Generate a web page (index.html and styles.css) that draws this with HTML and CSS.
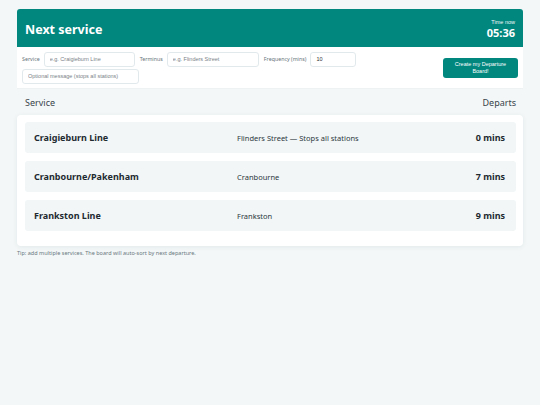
FILE: index.html
```html
<!DOCTYPE html>
<html>
<head>
<meta charset="utf-8">
<link rel="stylesheet" href="styles.css">
</head>
<body>
<div class="page">
  <header class="top">
    <h1 class="title">Next service</h1>
    <div class="clock">
      <div class="clock-label">Time now</div>
      <div class="clock-time">05:36</div>
    </div>
  </header>
  <form class="panel">
    <div class="fields">
      <label class="lbl">Service</label>
      <input class="inp inp-service" placeholder="e.g. Craigieburn Line">
      <label class="lbl">Terminus</label>
      <input class="inp inp-term" placeholder="e.g. Flinders Street">
      <label class="lbl">Frequency (mins)</label>
      <input class="inp inp-freq" value="10">
      <input class="inp inp-msg" placeholder="Optional message (stops all stations)">
    </div>
    <button type="button" class="btn">Create my Departure Board!</button>
  </form>
  <div class="cols">
    <span>Service</span>
    <span>Departs</span>
  </div>
  <div class="board">
    <div class="row">
      <div class="name">Craigieburn Line</div>
      <div class="dest">Flinders Street — Stops all stations</div>
      <div class="when">0 mins</div>
    </div>
    <div class="row">
      <div class="name">Cranbourne/Pakenham</div>
      <div class="dest">Cranbourne</div>
      <div class="when">7 mins</div>
    </div>
    <div class="row">
      <div class="name">Frankston Line</div>
      <div class="dest">Frankston</div>
      <div class="when">9 mins</div>
    </div>
  </div>
  <p class="tip">Tip: add multiple services. The board will auto-sort by next departure.</p>
</div>
</body>
</html>
```
FILE: styles.css
```css
* { box-sizing: border-box; }
html, body { margin: 0; padding: 0; }
body {
  background: #f3f7f8;
  font-family: "Noto Sans", "Open Sans", sans-serif;
  color: #1f2a30;
  width: 540px;
  height: 405px;
}
.page {
  padding: 9px 17px 0 17px;
}
.top {
  background: #02877f;
  color: #fff;
  height: 38px;
  border-radius: 3px 3px 0 0;
  display: flex;
  align-items: center;
  justify-content: space-between;
  padding: 0 8px;
}
.title {
  margin: 0;
  font-size: 12.5px;
  font-weight: 700;
  padding-top: 2px;
}
.clock { text-align: right; }
.clock-label {
  font-family: "Liberation Sans", Arial, sans-serif;
  font-size: 5.5px;
  line-height: 8px;
  opacity: 0.95;
}
.clock-time {
  font-size: 11px;
  font-weight: 700;
  line-height: 13px;
}
.panel {
  background: #fff;
  height: 42px;
  display: flex;
  align-items: center;
  justify-content: space-between;
  padding: 0 5px;
  border-bottom: 1px solid #eef2f3;
}
.fields {
  display: flex;
  flex-wrap: wrap;
  align-items: center;
  width: 340px;
  row-gap: 2px;
}
.lbl {
  font-size: 5.3px;
  color: #66737a;
  margin-right: 4px;
}
.inp {
  height: 15px;
  border: 1px solid #e2e9ec;
  border-radius: 3px;
  font-family: "Liberation Sans", Arial, sans-serif;
  font-size: 5.5px;
  padding: 0 5px;
  color: #333;
  background: #fff;
  margin-right: 5px;
}
.inp::placeholder { color: #7a8288; }
.inp-service { width: 91px; }
.inp-term { width: 92px; }
.inp-freq { width: 46px; }
.inp-msg { width: 117px; }
.btn {
  width: 75px;
  height: 20px;
  background: #02877f;
  color: #fff;
  border: 0;
  border-radius: 3px;
  font-family: "Liberation Sans", Arial, sans-serif;
  font-size: 5.5px;
  line-height: 7px;
  padding: 0 8px;
}
.cols {
  display: flex;
  justify-content: space-between;
  padding: 7px 7px 0 8px;
  height: 26px;
  font-size: 9px;
  color: #38444a;
}
.board {
  background: #fff;
  border-radius: 4px;
  box-shadow: 0 1px 5px rgba(30, 60, 70, 0.08);
  padding: 7px 7px 7px 8px;
}
.row {
  display: grid;
  grid-template-columns: 203px 1fr auto;
  align-items: center;
  height: 31px;
  margin-bottom: 8px;
  background: #f2f6f7;
  border-radius: 3px;
  padding: 0 11px 0 9px;
}
.name {
  font-size: 9px;
  font-weight: 700;
  color: #1e2a30;
}
.dest {
  font-size: 7.5px;
  color: #2c373d;
}
.when {
  font-size: 9px;
  font-weight: 700;
  color: #1e2a30;
}
.tip {
  margin: 3px 0 0 0;
  font-size: 5.5px;
  color: #6a777e;
}
```
